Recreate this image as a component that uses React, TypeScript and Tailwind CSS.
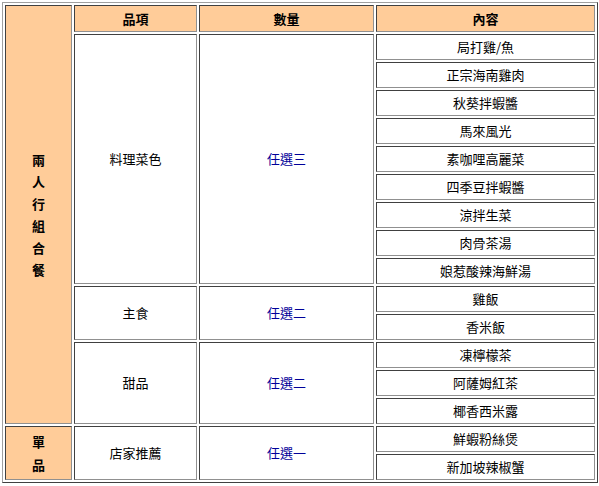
import React from "react";

const cell =
  "p-0 text-center align-middle border border-t-[#404040] border-l-[#404040] border-r-[#909090] border-b-[#909090]";
const head = `${cell} bg-[#ffcc99] font-bold h-[27px]`;
const side = `${cell} bg-[#ffcc99] font-bold leading-[22px]`;
const blue = "text-[#000099]";

const sections = [
  {
    name: "料理菜色",
    count: "任選三",
    items: [
      "局打雞/魚",
      "正宗海南雞肉",
      "秋葵拌蝦醬",
      "馬來風光",
      "素咖哩高麗菜",
      "四季豆拌蝦醬",
      "涼拌生菜",
      "肉骨茶湯",
      "娘惹酸辣海鮮湯",
    ],
  },
  { name: "主食", count: "任選二", items: ["雞飯", "香米飯"] },
  { name: "甜品", count: "任選二", items: ["凍檸檬茶", "阿薩姆紅茶", "椰香西米露"] },
  { name: "店家推薦", count: "任選一", items: ["鮮蝦粉絲煲", "新加坡辣椒蟹"] },
];

function Vertical({ text }: { text: string }) {
  return (
    <>
      {text.split("").map((c, i) => (
        <div key={i}>{c}</div>
      ))}
    </>
  );
}

export default function App() {
  const comboRows = sections.slice(0, 3).reduce((n, s) => n + s.items.length, 0) + 1;

  return (
    <div className="bg-white w-[599px] h-[486px] p-[2px] text-[13px] text-black font-['Noto_Sans_CJK_TC','Noto_Sans_CJK_SC',sans-serif]">
      <table className="table-fixed w-[596px] border-separate border-spacing-[2px] border border-t-[#a0a0a0] border-l-[#a0a0a0] border-r-[#404040] border-b-[#404040]">
        <colgroup>
          <col className="w-[67px]" />
          <col className="w-[123px]" />
          <col className="w-[175px]" />
          <col className="w-[219px]" />
        </colgroup>
        <tbody>
          <tr>
            <td rowSpan={comboRows} className={side}>
              <Vertical text="兩人行組合餐" />
            </td>
            <td className={head}>品項</td>
            <td className={head}>數量</td>
            <td className={head}>內容</td>
          </tr>
          {sections.map((s, si) =>
            s.items.map((item, i) => (
              <tr key={`${si}-${i}`}>
                {si === 3 && i === 0 && (
                  <td rowSpan={s.items.length} className={`${side} leading-[23px]`}>
                    <Vertical text="單品" />
                  </td>
                )}
                {i === 0 && (
                  <>
                    <td rowSpan={s.items.length} className={cell}>
                      {s.name}
                    </td>
                    <td rowSpan={s.items.length} className={`${cell} ${blue}`}>
                      {s.count}
                    </td>
                  </>
                )}
                <td className={`${cell} h-[26px]`}>{item}</td>
              </tr>
            ))
          )}
        </tbody>
      </table>
    </div>
  );
}
